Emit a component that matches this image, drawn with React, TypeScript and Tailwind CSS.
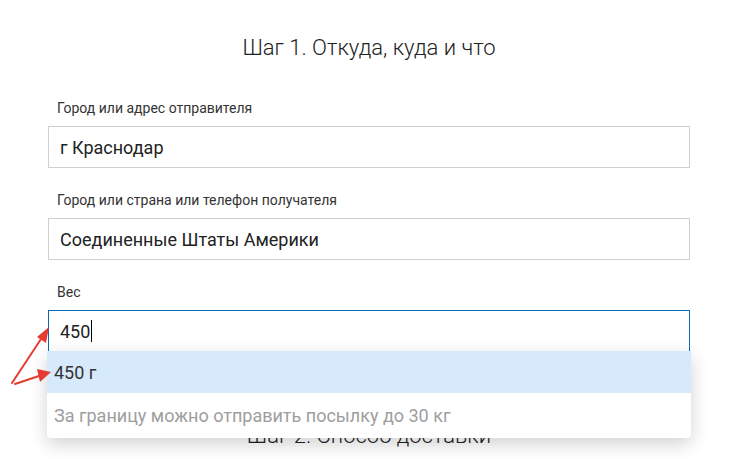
import React from 'react';

const Field: React.FC<{ label: string; value: string; focused?: boolean; children?: React.ReactNode }> = ({ label, value, focused, children }) => (
    <div className="relative mb-[24px]">
        <div className="text-[14px] leading-[16px] text-[#333] pl-[9px] mb-[10px]">{label}</div>
        <div
            className={`h-[42px] flex items-center pl-[11px] text-[18px] text-[#222] border ${
                focused ? 'border-[#0a6ab4]' : 'border-[#cfcfcf]'
            }`}
        >
            <span>{value}</span>
            {focused && <span className="w-px h-[22px] bg-black ml-px" />}
        </div>
        {children}
    </div>
);

const App: React.FC = () => {
    return (
        <div className="relative w-[748px] h-[459px] bg-white overflow-hidden font-['Roboto',sans-serif]">
            <div className="ml-[48px] w-[642px] pt-[35px]">
                <h1 className="text-center text-[22px] leading-[26px] font-light text-[#222] mb-[39px]">
                    Шаг 1. Откуда, куда и что
                </h1>

                <Field label="Город или адрес отправителя" value="г Краснодар" />
                <Field label="Город или страна или телефон получателя" value="Соединенные Штаты Америки" />
                <Field label="Вес" value="450" focused>
                    {/* suggestions */}
                    <div className="absolute left-[-1px] right-[-1px] top-[67px] z-10 bg-white rounded-b-[4px] shadow-[0_6px_18px_rgba(0,0,0,0.18)] overflow-hidden">
                        <div className="h-[42px] flex items-center pl-[7px] bg-[#d7eafb] text-[18px] text-[#333]">
                            450 г
                        </div>
                        <div className="h-[45px] flex items-center pl-[7px] text-[18px] text-[#9e9e9e]">
                            За границу можно отправить посылку до 30 кг
                        </div>
                    </div>
                </Field>

                <h2 className="text-center text-[22px] leading-[26px] font-light text-[#222] mt-[71px]">
                    Шаг 2. Способ доставки
                </h2>
            </div>

            {/* annotation arrows */}
            <svg className="absolute left-0 top-0 z-20 pointer-events-none" width="748" height="459">
                <g stroke="#e53b30" strokeWidth="2" strokeLinecap="round" fill="none">
                    <line x1="12" y1="383" x2="43" y2="336" />
                    <line x1="15" y1="384" x2="42" y2="375" />
                </g>
                <g fill="#e53b30">
                    <polygon points="49,327 46,343 37,337" />
                    <polygon points="51,372 40,382 37,369" />
                </g>
            </svg>
        </div>
    );
};

export default App;
